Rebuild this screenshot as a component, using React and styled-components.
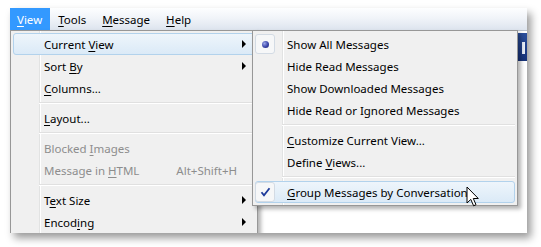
import React from "react";
import styled, { createGlobalStyle, css } from "styled-components";

const GlobalStyle = createGlobalStyle`
  html, body {
    margin: 0;
    background: #ffffff;
  }
  body {
    font-family: "Noto Sans", "Open Sans", sans-serif;
    font-size: 11.5px;
    color: #000;
  }
`;

const Page = styled.div`
  width: 541px;
  height: 247px;
  padding: 8px 0 0 10px;
  box-sizing: border-box;
  background: #fff;
`;

const Frame = styled.div`
  width: 517px;
  height: 225px;
  display: flex;
  flex-direction: column;
  position: relative;
  overflow: hidden;
  background: #fff;
  box-shadow: 4px 5px 8px rgba(0, 0, 0, 0.4);
`;

const MenuBar = styled.div`
  height: 22px;
  flex: none;
  display: flex;
  align-items: stretch;
  background: linear-gradient(#fdfeff 0%, #f1f4f9 45%, #dde4ee 100%);
  border-bottom: 1px solid #b9c1cc;
`;

const MenuTitle = styled.div`
  display: flex;
  align-items: center;
  padding: 0 8px;
  margin-left: ${(p) => (p.$first ? "-1px" : "0")};
  ${(p) =>
    p.$active &&
    css`
      background: #3399ff;
      color: #fff;
    `}
`;

const Content = styled.div`
  flex: 1;
  position: relative;
  display: flex;
  justify-content: flex-end;
  align-items: flex-start;
  padding-top: 2px;
`;

const ToolButton = styled.div`
  width: 30px;
  height: 28px;
  background: linear-gradient(#2b4f9c, #17337a);
  position: relative;
  &::after {
    content: "";
    position: absolute;
    right: 2px;
    top: 9px;
    width: 3px;
    height: 12px;
    background: #e8eef8;
  }
`;

const Menu = styled.div`
  position: absolute;
  top: ${(p) => p.$top}px;
  left: ${(p) => p.$left}px;
  width: ${(p) => p.$width}px;
  box-sizing: border-box;
  padding: 2px;
  border: 1px solid #979797;
  background: linear-gradient(
      to right,
      transparent ${(p) => p.$gutter}px,
      #e2e3e3 ${(p) => p.$gutter}px,
      #e2e3e3 ${(p) => p.$gutter + 1}px,
      #ffffff ${(p) => p.$gutter + 1}px,
      #ffffff ${(p) => p.$gutter + 2}px,
      transparent ${(p) => p.$gutter + 2}px
    ),
    #f0f0f0;
  box-shadow: 3px 3px 4px rgba(0, 0, 0, 0.3);
  z-index: ${(p) => p.$z};
`;

const Row = styled.div`
  height: 22px;
  box-sizing: border-box;
  display: flex;
  align-items: center;
  border: 1px solid transparent;
  border-radius: 3px;
  color: ${(p) => (p.$disabled ? "#8d8d8d" : "#000")};
  position: relative;
  ${(p) =>
    p.$hover &&
    css`
      border-color: #b2d2ec;
      background: linear-gradient(#eef5fb, #dbeaf7);
    `}
`;

const IconCell = styled.div`
  width: ${(p) => p.$w}px;
  height: 20px;
  flex: none;
  display: flex;
  align-items: center;
  justify-content: flex-start;
`;

const CheckFrame = styled.div`
  width: 20px;
  height: 20px;
  box-sizing: border-box;
  border: 1px solid #d3dbe4;
  border-radius: 3px;
  background: #f6f7f8;
  display: flex;
  align-items: center;
  justify-content: center;
  margin-left: -1px;
`;

const Dot = styled.div`
  width: 7px;
  height: 7px;
  border-radius: 50%;
  background: radial-gradient(circle at 35% 35%, #9aa6e8 0%, #3a45a8 55%, #1c2270 100%);
`;

const Label = styled.div`
  flex: 1;
  padding-left: 5px;
  white-space: nowrap;
`;

const Shortcut = styled.div`
  padding-right: 17px;
  white-space: nowrap;
`;

const Arrow = styled.div`
  width: 0;
  height: 0;
  border-top: 4px solid transparent;
  border-bottom: 4px solid transparent;
  border-left: 4px solid #000;
  margin-right: 8px;
`;

const Separator = styled.div`
  height: 8px;
  display: flex;
  align-items: center;
  padding-left: ${(p) => p.$indent}px;
  &::before {
    content: "";
    flex: 1;
    height: 1px;
    border-bottom: 1px solid #fff;
    background: #e0e0e0;
  }
`;

const Cursor = styled.svg`
  position: absolute;
  left: 210px;
  top: 4px;
`;

const U = styled.span`
  text-decoration: underline;
  text-underline-offset: 2px;
`;

const mk = (text, idx) =>
  idx == null ? (
    text
  ) : (
    <>
      {text.slice(0, idx)}
      <U>{text[idx]}</U>
      {text.slice(idx + 1)}
    </>
  );

const viewItems = [
  { label: "Current View", u: 8, sub: true, hover: true },
  { label: "Sort By", u: 5, sub: true },
  { label: "Columns...", u: 0 },
  { sep: true },
  { label: "Layout...", u: 0 },
  { sep: true },
  { label: "Blocked Images", u: 8, disabled: true },
  { label: "Message in HTML", u: 11, disabled: true, shortcut: "Alt+Shift+H" },
  { sep: true },
  { label: "Text Size", u: 1, sub: true },
  { label: "Encoding", u: 5, sub: true },
];

const currentViewItems = [
  { label: "Show All Messages", radio: true },
  { label: "Hide Read Messages" },
  { label: "Show Downloaded Messages" },
  { label: "Hide Read or Ignored Messages" },
  { sep: true },
  { label: "Customize Current View...", u: 0 },
  { label: "Define Views...", u: 7 },
  { sep: true },
  { label: "Group Messages by Conversation", u: 0, check: true, hover: true, cursor: true },
];

const CheckMark = () => (
  <svg width="11" height="10" viewBox="0 0 11 10">
    <path d="M1.5 5.2 L4 8.3 L9.5 1.2" fill="none" stroke="#1d3a9a" strokeWidth="1.8" />
  </svg>
);

const PointerCursor = () => (
  <Cursor width="14" height="22" viewBox="0 0 14 22">
    <path
      d="M1 1 L1 17 L4.8 13.4 L7.6 19.8 L10 18.7 L7.3 12.5 L12.3 12.5 Z"
      fill="#fff"
      stroke="#000"
      strokeWidth="1"
      strokeLinejoin="round"
    />
  </Cursor>
);

const MenuList = ({ items, icon, indent }) =>
  items.map((it, i) =>
    it.sep ? (
      <Separator key={i} $indent={indent} />
    ) : (
      <Row key={i} $hover={it.hover} $disabled={it.disabled}>
        <IconCell $w={icon}>
          {(it.radio || it.check) && (
            <CheckFrame>{it.radio ? <Dot /> : <CheckMark />}</CheckFrame>
          )}
        </IconCell>
        <Label>{mk(it.label, it.u)}</Label>
        {it.shortcut && <Shortcut>{it.shortcut}</Shortcut>}
        {it.sub && <Arrow />}
        {it.cursor && <PointerCursor />}
      </Row>
    )
  );

const App = () => {
  return (
    <Page>
      <GlobalStyle />
      <Frame>
        <MenuBar>
          <MenuTitle $first $active>
            <span>
              <U>V</U>iew
            </span>
          </MenuTitle>
          <MenuTitle>
            <span>
              <U>T</U>ools
            </span>
          </MenuTitle>
          <MenuTitle>
            <span>
              <U>M</U>essage
            </span>
          </MenuTitle>
          <MenuTitle>
            <span>
              <U>H</U>elp
            </span>
          </MenuTitle>
        </MenuBar>
        <Content>
          <ToolButton />
          <Menu $top={-1} $left={0} $width={248} $gutter={28} $z={1}>
            <MenuList items={viewItems} icon={25} indent={26} />
          </Menu>
          <Menu $top={-1} $left={242} $width={266} $gutter={29} $z={2}>
            <MenuList items={currentViewItems} icon={26} indent={27} />
          </Menu>
        </Content>
      </Frame>
    </Page>
  );
};

export default App;
